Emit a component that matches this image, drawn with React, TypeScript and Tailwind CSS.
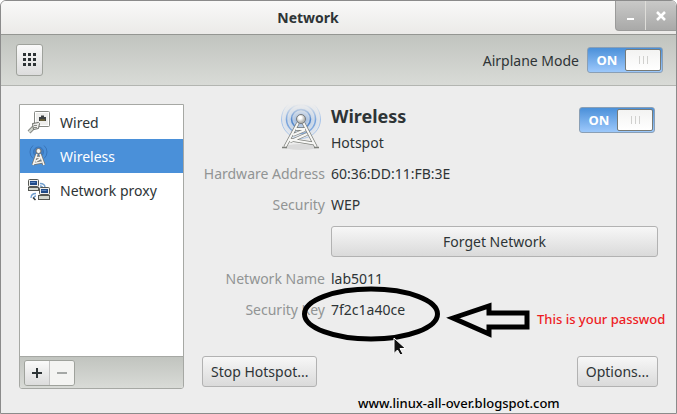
import { useState } from 'react';
import type { ReactNode } from 'react';
import clsx from 'clsx';

function WiredIcon() {
  return (
    <svg width="24" height="24" viewBox="0 0 24 24" fill="none" aria-hidden="true">
      <rect x="7.5" y="1.5" width="15" height="15" rx="1" fill="#eeeeec" stroke="#888a85" />
      <rect x="8.5" y="2.5" width="13" height="13" stroke="#fff" />
      <path d="M12 11V7h2V5.500h3V7h2v4z" fill="#3c4042" />
      <path d="M13 10h5" stroke="#8f7b2e" />
      <path d="M2 22l5-5" stroke="#888a85" strokeWidth="4" />
      <path d="M2 22l5-5" stroke="#d3d7cf" strokeWidth="2" />
      <path d="M5.500 13.500l6-1 1 1-1 5-5 1z" fill="#eeeeec" stroke="#6b6e69" />
      <path d="M7 15.500h3M7 17.500h3" stroke="#888a85" />
    </svg>
  );
}

function SmallAntennaIcon() {
  return (
    <svg width="24" height="24" viewBox="0 0 24 24" fill="none" aria-hidden="true">
      <circle cx="11.500" cy="8" r="4.500" fill="#3465a4" fillOpacity="0.4" />
      <circle cx="11.500" cy="8" r="5" stroke="#2f62a3" strokeOpacity="0.6" />
      <path d="M6 1.500a8.500 8.500 0 0 0 0 13M17 1.500a8.500 8.500 0 0 1 0 13" stroke="#2f62a3" strokeOpacity="0.6" />
      <path d="M10 10L6 21M13 10l4 11M9 13.500h5M8.500 17.500l5-3M7 19.500l8-1.500" stroke="#77736b" strokeWidth="3" />
      <path d="M10 10L6 21M13 10l4 11M9 13.500h5M8.500 17.500l5-3M7 19.500l8-1.500" stroke="#f3f3f0" strokeWidth="1.600" />
      <circle cx="11.500" cy="7" r="2.500" fill="#f3f3f0" stroke="#77736b" />
    </svg>
  );
}

function ProxyIcon() {
  return (
    <svg width="24" height="24" viewBox="0 0 24 24" fill="none" aria-hidden="true">
      <path d="M13 5.500c3 0 5 1 5 4M13 8c1.500 0 2.500.5 2.500 2" stroke="#729fcf" strokeWidth="1.300" />
      <path d="M4 20c0-3 1.500-4.500 5-4.500M7 20c0-1.500.5-2 2-2" stroke="#729fcf" strokeWidth="1.300" />
      <rect x="1.500" y="1.500" width="10" height="7" rx="1" fill="#eeeeec" stroke="#555753" />
      <rect x="3" y="3" width="7" height="4" fill="#204a87" />
      <path d="M3.500 4.500h5" stroke="#5d86c0" />
      <rect x="1.500" y="9.500" width="10" height="3" fill="#d3d7cf" stroke="#555753" />
      <rect x="12.500" y="9.500" width="10" height="7" rx="1" fill="#eeeeec" stroke="#555753" />
      <rect x="14" y="11" width="7" height="4" fill="#204a87" />
      <path d="M14.500 12.500h5" stroke="#5d86c0" />
      <rect x="11.500" y="17.500" width="11" height="4" fill="#d3d7cf" stroke="#555753" />
      <path d="M6 19.500l2.500 2.500" stroke="#2e3436" strokeWidth="1.500" />
    </svg>
  );
}

function AntennaIcon() {
  const tower = 'M21 19L8 43M26.500 19L39 43M19 25h9M16 31l12-5M13 37.500L30 30M12 35.500l25 4';
  return (
    <svg width="48" height="48" viewBox="0 0 48 48" fill="none" aria-hidden="true">
      <defs>
        <linearGradient id="fade" x1="0" y1="0" x2="0" y2="36" gradientUnits="userSpaceOnUse">
          <stop offset="0" stopColor="#fff" stopOpacity="0" />
          <stop offset="0.450" stopColor="#fff" />
          <stop offset="1" stopColor="#fff" stopOpacity="0.800" />
        </linearGradient>
        <mask id="waves">
          <rect width="48" height="37" fill="url(#fade)" />
        </mask>
        <radialGradient id="glow">
          <stop offset="0" stopColor="#3f78c4" stopOpacity="0.900" />
          <stop offset="0.500" stopColor="#6f9fdc" stopOpacity="0.500" />
          <stop offset="1" stopColor="#a5c3ea" stopOpacity="0.200" />
        </radialGradient>
        <radialGradient id="ball" cx="0.400" cy="0.350">
          <stop offset="0.300" stopColor="#fff" />
          <stop offset="1" stopColor="#b8b9b5" />
        </radialGradient>
      </defs>
      <g mask="url(#waves)">
        <circle cx="24" cy="15" r="19.500" fill="url(#glow)" fillOpacity="0.700" />
        <circle cx="24" cy="15" r="9.500" stroke="#4f85cb" strokeWidth="1.500" />
        <circle cx="24" cy="15" r="14.500" stroke="#77a3dc" strokeWidth="1.500" />
        <circle cx="24" cy="15" r="19.500" stroke="#a3c1e8" />
      </g>
      <ellipse cx="24" cy="43" rx="17" ry="3" fill="#000" fillOpacity="0.080" />
      <path d={tower} stroke="#7d7f7a" strokeWidth="3.500" />
      <path d={tower} stroke="#f7f7f5" strokeWidth="2" />
      <path d="M5 43.500h5M37 43.500h5" stroke="#7d7f7a" strokeWidth="1.500" />
      <circle cx="24" cy="15" r="4.500" fill="url(#ball)" stroke="#77797a" />
    </svg>
  );
}

function Switch({ label }: { label: string }) {
  const [on, setOn] = useState(true);

  return (
    <label
      className={clsx(
        'relative flex h-[26px] w-[76px] shrink-0 items-center rounded-[3px] border border-[#8a9fb5] p-px',
        on ? 'bg-linear-to-b from-[#4a90d9] to-[#9cc8fb]' : 'flex-row-reverse bg-[#cfd1cd]'
      )}
    >
      <input
        type="checkbox"
        role="switch"
        aria-label={label}
        checked={on}
        onChange={() => setOn(!on)}
        className="absolute inset-0 opacity-0"
      />
      <span className="flex-1 text-center text-[13px] font-bold text-white">{on ? 'ON' : 'OFF'}</span>
      <span className="flex h-[22px] w-9 items-center justify-center gap-[3px] rounded-xs border border-[#777a76] bg-linear-to-b from-[#f3f3f2] to-white">
        <i className="h-2 w-px bg-[#d0d0ce]" />
        <i className="h-2 w-px bg-[#d0d0ce]" />
        <i className="h-2 w-px bg-[#d0d0ce]" />
      </span>
    </label>
  );
}

function Button({ children, className }: { children: ReactNode; className?: string }) {
  return (
    <button
      className={clsx(
        'h-[31px] rounded-[3px] border border-[#b2b2b2] bg-linear-to-b from-[#f7f7f7] to-[#dadada] px-2',
        className
      )}
    >
      {children}
    </button>
  );
}

// Hand-drawn ring, arrow and pointer around the security key
function KeyMarkup() {
  return (
    <div className="absolute -top-4 -left-8 flex items-center text-[13px] font-medium text-[#ed1c24]">
      <svg width="238" height="70" viewBox="0 0 238 70" fill="none" className="shrink-0" aria-hidden="true">
        <ellipse cx="72" cy="30" rx="66.500" ry="25" stroke="#000" strokeWidth="5" />
        <path d="M154 34l36-12v7h38v14h-38v7z" stroke="#000" strokeWidth="5" />
        <path
          d="M95 54v15.500l3.500-3.500 3.500 6.500 2.500-1.500-3.500-6.500h5.500z"
          fill="#111"
          stroke="#fff"
          strokeWidth="1"
          className="overflow-visible"
        />
      </svg>
      <span className="whitespace-nowrap">This is your passwod</span>
    </div>
  );
}

export default function App() {
  const [active, setActive] = useState('wireless');

  const devices = [
    { id: 'wired', label: 'Wired', icon: WiredIcon },
    { id: 'wireless', label: 'Wireless', icon: SmallAntennaIcon },
    { id: 'proxy', label: 'Network proxy', icon: ProxyIcon },
  ];

  return (
    <div className="relative flex min-h-screen flex-col overflow-hidden rounded-t-md border border-[#8b8b8b] bg-[#ededed] font-['Noto_Sans',sans-serif] text-[14px] leading-[19px] text-[#2e3436]">
      <header className="flex h-[34px] border-b border-[#949692] bg-linear-to-b from-[#f9f9f8] to-[#ebeae8]">
        <h1 className="flex-1 self-center text-center font-bold">Network</h1>
        <div className="flex h-[30px] rounded-bl-[4px] border-b border-l border-[#9b9b9a] bg-linear-to-b from-[#c9c9c8] to-[#a9a9a8]">
          <button aria-label="Minimize" className="flex w-[30px] items-center justify-center border-r border-[#deddd9]">
            <svg width="11" height="11" viewBox="0 0 11 11">
              <path d="M2 9h7" stroke="#fff" strokeWidth="2" />
            </svg>
          </button>
          <button aria-label="Close" className="flex w-[30px] items-center justify-center">
            <svg width="12" height="12" viewBox="0 0 12 12">
              <path d="M2 2l8 8M10 2l-8 8" stroke="#fff" strokeWidth="2.500" />
            </svg>
          </button>
        </div>
      </header>

      <div className="flex h-[51px] items-center justify-between border-b border-[#b3b5b1] bg-linear-to-b from-[#c1c4bf] to-[#d9dbd7] pr-[13px] pl-[15px]">
        <button
          aria-label="All Settings"
          className="flex h-8 w-[27px] items-center justify-center rounded-[3px] border border-[#9fa29c] bg-linear-to-b from-[#fafafa] to-[#dcdcdc]"
        >
          <svg width="13" height="14" viewBox="0 0 13 14" stroke="#2e3436" strokeWidth="3" strokeDasharray="3 2">
            <path d="M0 1.500h13M0 6.500h13M0 11.500h13" />
          </svg>
        </button>
        <div className="flex items-center gap-2">
          <span>Airplane Mode</span>
          <Switch label="Airplane Mode" />
        </div>
      </div>

      <main className="flex flex-1 gap-[18px] pt-[18px] pr-[18px] pb-6 pl-[18px]">
        <aside className="flex w-[165px] shrink-0 flex-col overflow-hidden rounded-b-[3px] border border-[#a6a8a4] bg-white">
          <nav className="flex flex-1 flex-col">
            {devices.map((device) => {
              const Icon = device.icon;
              return (
                <button
                  key={device.id}
                  onClick={() => setActive(device.id)}
                  className={clsx(
                    'flex h-[34px] items-center gap-[9px] pl-[7px] text-left',
                    active === device.id && 'bg-[#4a90d9] text-white'
                  )}
                >
                  <Icon />
                  <span>{device.label}</span>
                </button>
              );
            })}
          </nav>
          <div className="flex h-8 items-center border-t border-[#a6a8a4] bg-linear-to-b from-[#c1c4bf] to-[#d9dbd7] pl-1">
            <div className="flex h-[26px] overflow-hidden rounded-[3px] border border-[#9fa29c]">
              <button aria-label="Add" className="flex w-[25px] items-center justify-center border-r border-[#c4c4c4] bg-linear-to-b from-[#fafafa] to-[#dcdcdc]">
                <svg width="10" height="10" viewBox="0 0 10 10">
                  <path d="M0 5h10M5 0v10" stroke="#2e3436" strokeWidth="2" />
                </svg>
              </button>
              <button aria-label="Remove" disabled className="flex w-6 items-center justify-center bg-[#f4f4f2]">
                <svg width="10" height="10" viewBox="0 0 10 10">
                  <path d="M0 5h10" stroke="#a5a8a6" strokeWidth="2" />
                </svg>
              </button>
            </div>
          </div>
        </aside>

        <section className="flex min-w-0 flex-1 flex-col">
          <div className="grid grid-cols-[123px_1fr] gap-x-[6px] gap-y-3">
            <div className="flex justify-end">
              <AntennaIcon />
            </div>
            <div className="flex items-start justify-between pt-[3px] pr-[3px]">
              <div className="flex flex-col gap-[7px]">
                <h2 className="text-[18px] font-bold">Wireless</h2>
                <p>Hotspot</p>
              </div>
              <Switch label="Wireless" />
            </div>

            <span className="text-right text-[#919494]">Hardware Address</span>
            <span>60:36:DD:11:FB:3E</span>
            <span className="text-right text-[#919494]">Security</span>
            <span>WEP</span>
            <Button className="col-start-2">Forget Network</Button>
            <span className="text-right text-[#919494]">Network Name</span>
            <span>lab5011</span>
            <span className="text-right text-[#919494]">Security Key</span>
            <div className="relative">
              7f2c1a40ce
              <KeyMarkup />
            </div>
          </div>

          <div className="mt-auto flex justify-between pb-[2px]">
            <Button>Stop Hotspot...</Button>
            <Button>Options...</Button>
          </div>
        </section>
      </main>

      <a
        href="#"
        className="absolute bottom-0 left-[357px] text-[13px] font-medium text-black"
      >
        www.linux-all-over.blogspot.com
      </a>
    </div>
  );
}
